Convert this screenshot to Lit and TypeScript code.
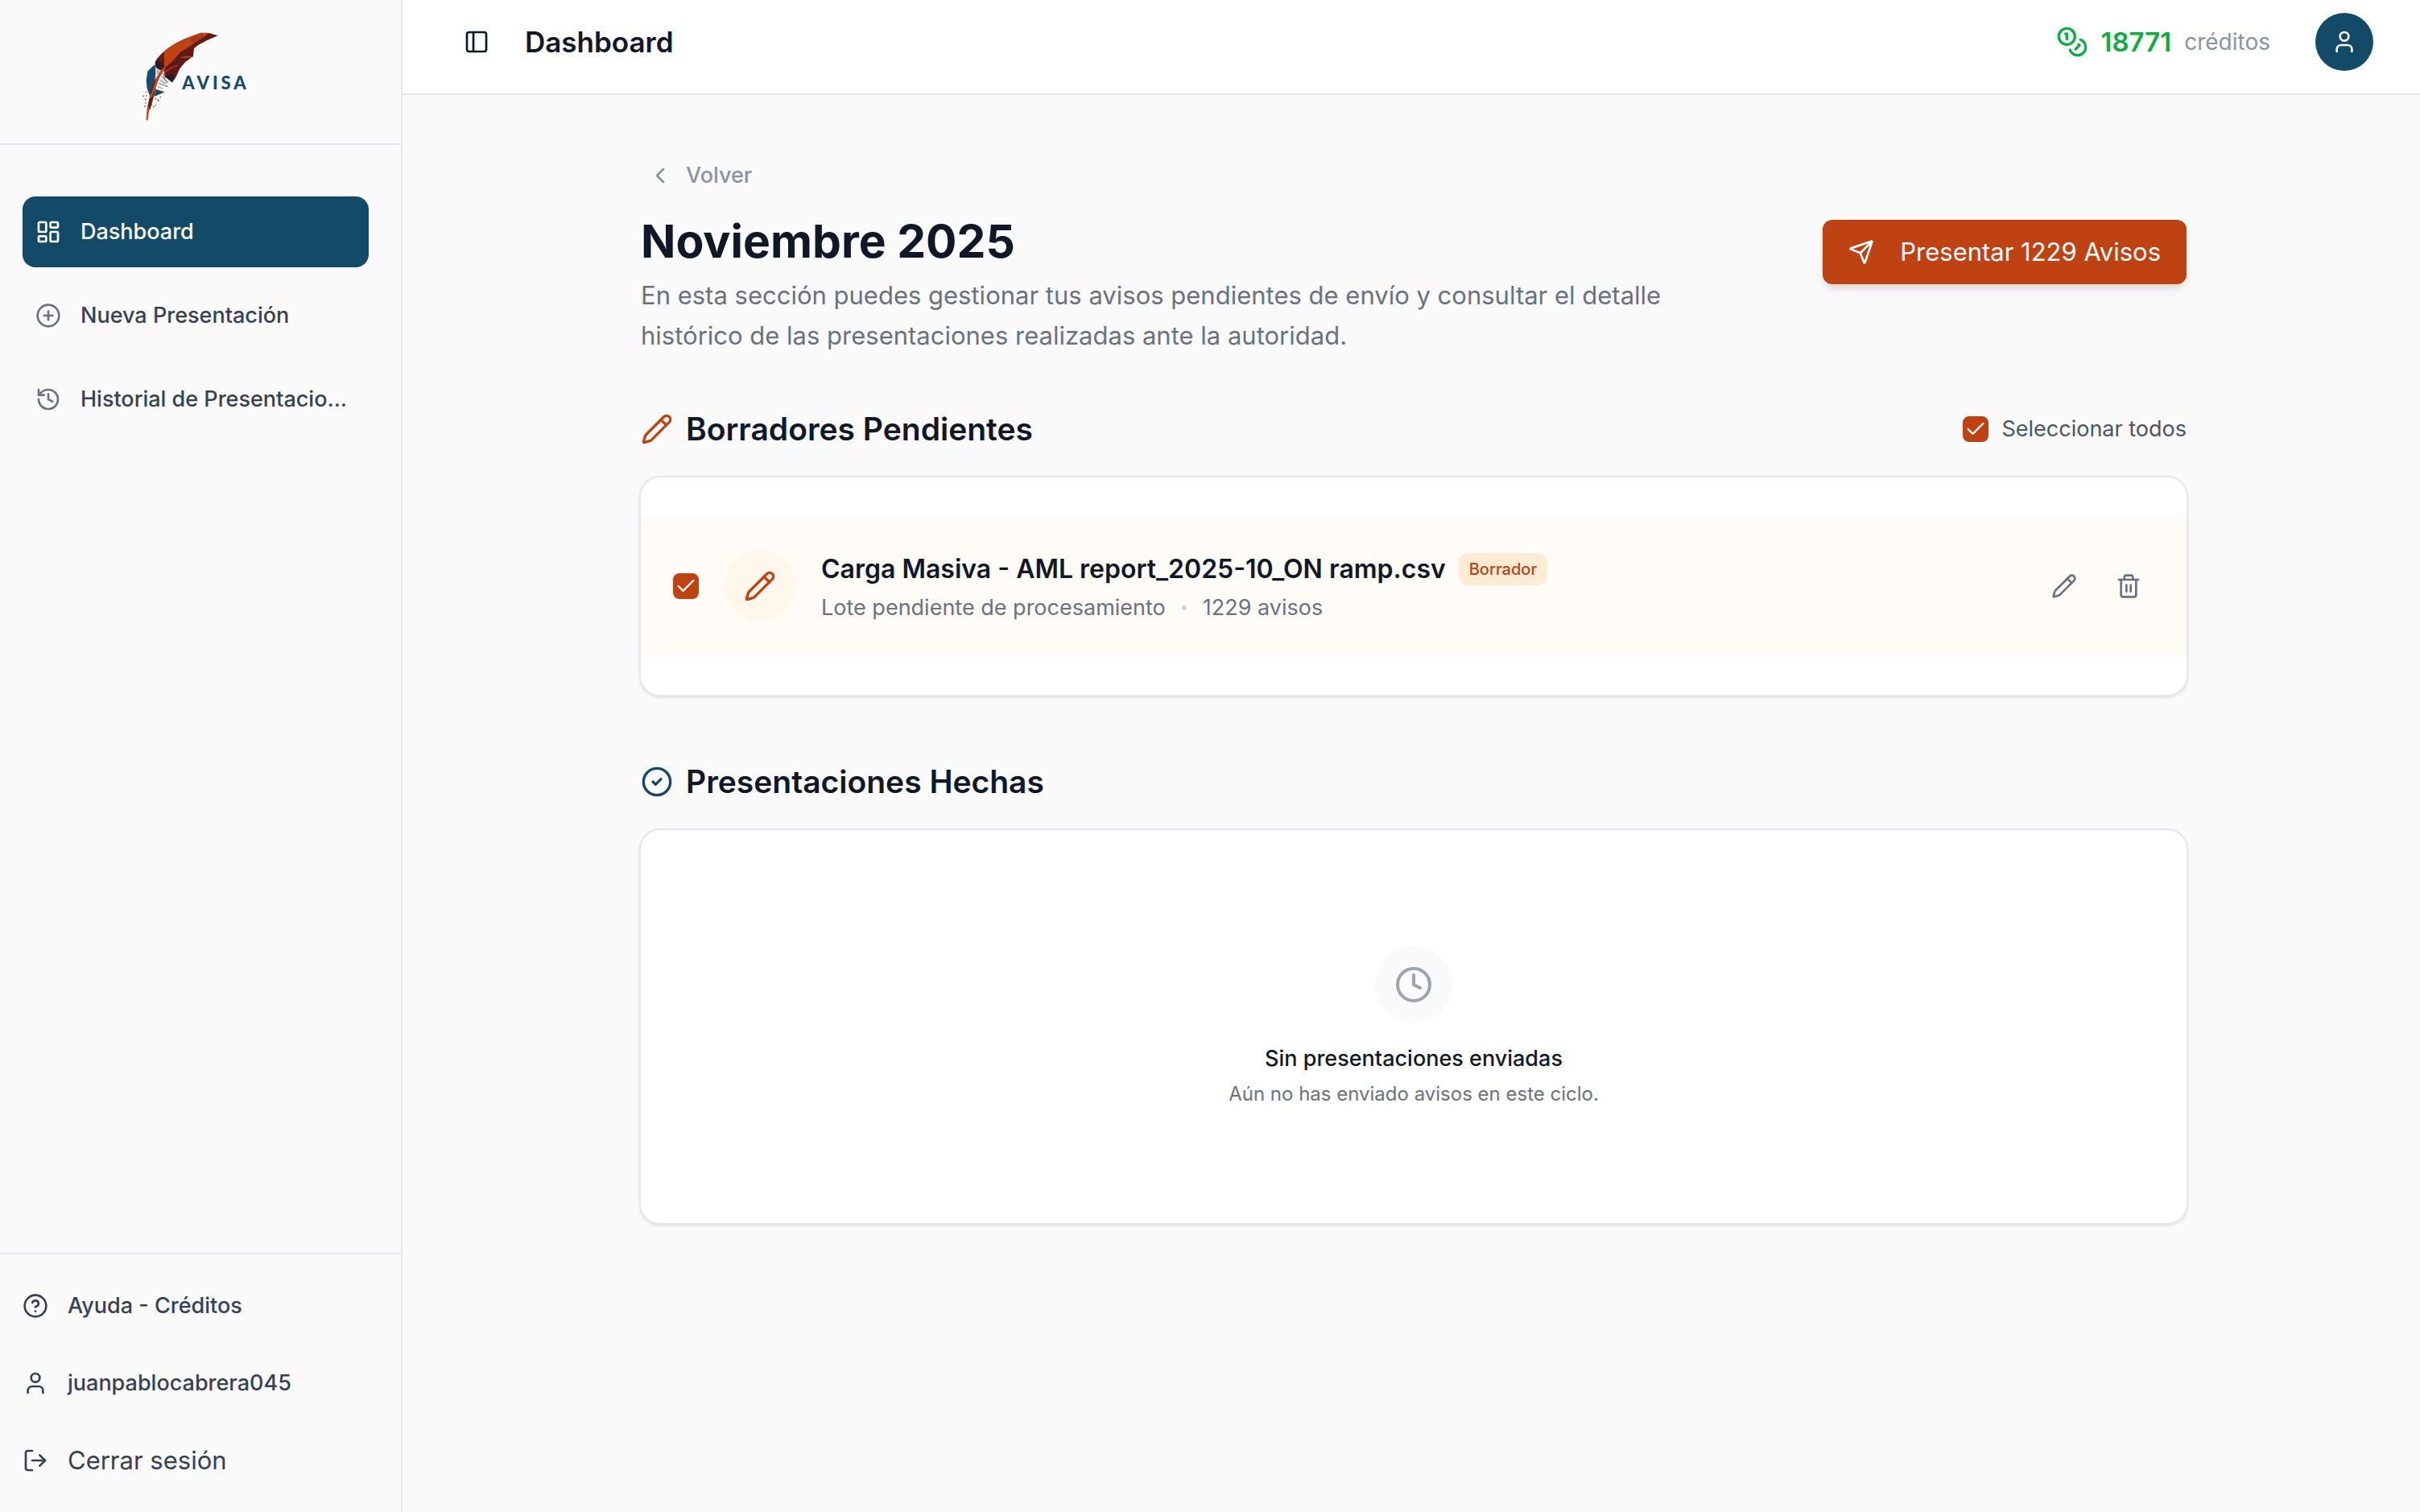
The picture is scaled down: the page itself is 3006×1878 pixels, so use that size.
import { LitElement, html, css, svg, nothing } from "lit";
import { customElement, property, state } from "lit/decorators.js";

const ICONS: Record<string, unknown> = {
  dashboard: svg`<rect x="3" y="3" width="7" height="9" rx="1"/><rect x="14" y="3" width="7" height="5" rx="1"/><rect x="14" y="12" width="7" height="9" rx="1"/><rect x="3" y="16" width="7" height="5" rx="1"/>`,
  plus: svg`<circle cx="12" cy="12" r="10"/><path d="M8 12h8M12 8v8"/>`,
  history: svg`<path d="M3 12a9 9 0 1 0 9-9 9.75 9.75 0 0 0-6.74 2.74L3 8"/><path d="M3 3v5h5"/><path d="M12 7v5l4 2"/>`,
  help: svg`<circle cx="12" cy="12" r="10"/><path d="M9.09 9a3 3 0 0 1 5.83 1c0 2-3 3-3 3"/><path d="M12 17h.01"/>`,
  user: svg`<path d="M19 21v-2a4 4 0 0 0-4-4H9a4 4 0 0 0-4 4v2"/><circle cx="12" cy="7" r="4"/>`,
  logout: svg`<path d="M9 21H5a2 2 0 0 1-2-2V5a2 2 0 0 1 2-2h4"/><path d="m16 17 5-5-5-5"/><path d="M21 12H9"/>`,
  panel: svg`<rect x="3" y="3" width="18" height="18" rx="2"/><path d="M9 3v18"/>`,
  coins: svg`<circle cx="8" cy="8" r="6"/><path d="M18.09 10.37A6 6 0 1 1 10.34 18"/><path d="M7 6h1v4"/><path d="m16.71 13.88.7.71-2.82 2.82"/>`,
  back: svg`<path d="m15 18-6-6 6-6"/>`,
  send: svg`<path d="M14.536 21.686a.5.5 0 0 0 .937-.024l6.5-19a.496.496 0 0 0-.635-.635l-19 6.5a.5.5 0 0 0-.024.937l7.93 3.18a2 2 0 0 1 1.112 1.11z"/><path d="m21.854 2.147-10.94 10.939"/>`,
  pencil: svg`<path d="M21.174 6.812a1 1 0 0 0-3.986-3.987L3.842 16.174a2 2 0 0 0-.5.83l-1.321 4.352a.5.5 0 0 0 .623.622l4.353-1.32a2 2 0 0 0 .83-.497z"/><path d="m15 5 4 4"/>`,
  trash: svg`<path d="M3 6h18"/><path d="M19 6v14a2 2 0 0 1-2 2H7a2 2 0 0 1-2-2V6"/><path d="M8 6V4a2 2 0 0 1 2-2h4a2 2 0 0 1 2 2v2"/><path d="M10 11v6M14 11v6"/>`,
  done: svg`<circle cx="12" cy="12" r="10"/><path d="m9 12 2 2 4-4"/>`,
  clock: svg`<circle cx="12" cy="12" r="10"/><path d="M12 6v6l4 2"/>`,
  check: svg`<path d="M20 6 9 17l-5-5"/>`,
};

@customElement("app-icon")
export class AppIcon extends LitElement {
  @property() name = "";

  static styles = css`
    :host { display: block; flex: none; width: 32px; height: 32px; }
    .glyph { display: block; width: 100%; height: 100%; }
  `;

  render() {
    return html`<svg class="glyph" viewBox="0 0 24 24" fill="none" stroke="currentColor"
      stroke-width="2" stroke-linecap="round" stroke-linejoin="round" aria-hidden="true">${ICONS[this.name] ?? nothing}</svg>`;
  }
}

@customElement("avisa-logo")
export class AvisaLogo extends LitElement {
  static styles = css`
    :host { display: block; width: 200px; height: 150px; }
    .mark { display: block; width: 100%; height: 100%; }
    .word { font-family: Lato, "Open Sans", sans-serif; font-weight: 900; font-size: 66px; letter-spacing: 12px; fill: #154c6b; }
  `;

  render() {
    return html`<svg class="mark" viewBox="-3 -18 600 450" role="img" aria-label="AVISA">
      <path fill="#154c6b" d="M126 180 L100 206 L95 240 L98 270 L108 296 L126 262 L131 200Z"/>
      <path fill="#154c6b" d="M124 300 L130 272 L164 283Z"/>
      <path fill="#e4e5e8" d="M130 190 L150 206 L128 258Z M160 208 L196 246 L172 250 L140 262Z"/>
      <path fill="none" stroke="#39475a" stroke-width="2" d="M122 186l8 30M130 182l12 26M134 204l8 14M158 214l8 28M152 224l22 22M146 238l22 16M140 250l36 14M138 262l18 8M118 282l18 14M104 250l18 22"/>
      <path fill="#651a1a" d="M128 176 Q132 156 161 132 Q200 98 262 76 L298 62 L330 63 L362 73 L320 91 L288 108 L273 121 L270 149 L240 172 L220 196 L208 222 L192 247 L164 226 L160 198 L148 202 L130 190Z"/>
      <path fill="#bf4213" d="M161 133 Q200 98 262 76 L298 62 L330 63 L300 84 L256 113 L222 135 L192 168 L163 195Z"/>
      <path fill="#bf4213" d="M217 155 L240 149 L270 150 L262 155Z M163 207 Q190 186 214 180 L212 185 Q184 194 163 212Z"/>
      <path fill="#301923" d="M128 172 L136 158 L162 190 L160 198 L148 202 L130 190Z M164 224 L186 216 L206 224 L192 247Z"/>
      <path fill="none" stroke="#301923" stroke-width="3" stroke-dasharray="3 4" d="M264 92l44-22M266 99l32-16M262 86l22-10M172 188l60-22M176 196l52-20M180 204l40-14M172 214l38-8M200 172l36-8"/>
      <path fill="#651a1a" d="M162 194 Q140 228 132 262 L122 304 L110 346 L104 352 L98 388 L95 386 L100 336 L110 290 L120 252 Q138 216 162 194Z"/>
      <path fill="#c8481a" d="M164 188 Q144 204 134 228 L122 264 L108 304 L114 306 L132 262 Q142 226 164 200Z M99 334 L107 338 L101 388 L95 388Z"/>
      <path fill="#2c2f45" d="M82 296h4v4h-4zM90 308h4v4h-4zM128 306h4v4h-4zM146 300h4v4h-4zM120 336h4v4h-4zM88 334h4v4h-4zM112 328h4v4h-4z"/>
      <path fill="#bf4213" d="M92 281h4v4h-4zM91 322h4v4h-4zM136 310h4v4h-4zM138 313h4v4h-4zM128 331h4v4h-4zM93 295h4v4h-4zM152 281h5v5h-5zM168 258h4v4h-4zM169 245h4v4h-4z"/>
      <text class="word" x="229" y="272">AVISA</text>
    </svg>`;
  }
}

@customElement("app-root")
export class AppRoot extends LitElement {
  @state() private selected = true;

  static styles = css`
    :host {
      --ink: #101828;
      --slate: #364153;
      --muted: #6a7282;
      --faint: #8b93a1;
      --line: #e5e7eb;
      --blue: #134a68;
      --rust: #bf4213;
      display: grid;
      grid-template-columns: 500px minmax(0, 1fr);
      min-height: 100vh;
      background: #fafafa;
      color: var(--ink);
      font-family: Inter, "Liberation Sans", sans-serif;
      font-size: 27px;
      line-height: 40px;
    }
    *, *::before, *::after { box-sizing: border-box; }
    h1, h2, h3, p, ul { margin: 0; padding: 0; }
    ul { list-style: none; }
    button { border: 0; background: none; padding: 0; margin: 0; font: inherit; color: inherit; cursor: pointer; }
    a { color: inherit; text-decoration: none; }

    .sidebar { display: flex; flex-direction: column; border-right: 2px solid var(--line); }
    .brand { display: flex; justify-content: center; padding: 14px 0; border-bottom: 2px solid var(--line); }
    .nav { flex: 1; padding: 64px 40px 64px 28px; }
    .nav-list { display: grid; grid-template-columns: minmax(0, 1fr); gap: 16px; }
    .nav-link { display: flex; align-items: center; gap: 24px; height: 88px; padding: 0 16px; border-radius: 16px; font-weight: 500; color: var(--slate); }
    .nav-link app-icon { color: var(--muted); }
    .nav-link.active, .nav-link.active app-icon { color: #fff; }
    .nav-link.active { background: var(--blue); }
    .nav-text { white-space: nowrap; }
    .foot { display: grid; gap: 16px; padding: 24px 28px; border-top: 2px solid var(--line); color: var(--slate); }
    .foot-item { display: flex; align-items: center; gap: 24px; height: 80px; font-weight: 500; text-align: left; }
    .foot-item.large { font-size: 31px; font-weight: 400; }

    .page { display: flex; flex-direction: column; min-width: 0; }
    .topbar { display: flex; align-items: center; gap: 28px; padding: 16px 58px 28px 60px; background: #fff; border-bottom: 2px solid var(--line); }
    .square { display: grid; place-items: center; width: 64px; height: 64px; }
    .crumb { flex: 1; font-size: 35px; font-weight: 600; }
    .credits { display: flex; align-items: center; gap: 16px; margin-right: 28px; color: #0fac43; }
    .icon-lg { width: 40px; height: 40px; }
    .count { font-size: 33px; font-weight: 600; }
    .unit { color: var(--faint); font-size: 28px; }
    .avatar { display: grid; place-items: center; width: 72px; height: 72px; border-radius: 50%; background: var(--blue); color: #fff; }

    .content { width: 100%; padding: 66px 32px 66px 38px; }
    .column { max-width: 1920px; margin: 0 auto; }
    .intro { display: flex; align-items: center; justify-content: space-between; gap: 32px; }
    .back { display: flex; align-items: center; gap: 16px; height: 68px; padding: 0 8px; color: var(--faint); font-weight: 500; }
    .title { margin-top: 12px; font-size: 57px; line-height: 72px; font-weight: 700; }
    .lead { max-width: 1344px; margin-top: 6px; font-size: 31px; line-height: 50px; color: var(--muted); }
    .submit { display: flex; flex: none; align-items: center; gap: 32px; height: 80px; padding: 0 32px; border-radius: 12px; background: var(--rust); color: #fff; font-size: 31px;
      box-shadow: 0 8px 12px -2px rgb(0 0 0 / 0.1), 0 4px 8px -4px rgb(0 0 0 / 0.1); }

    .section-head { display: flex; align-items: center; justify-content: space-between; margin-top: 63px; margin-bottom: 32px; }
    .section-head.next { margin-top: 80px; }
    .section-title { display: flex; align-items: center; gap: 16px; font-size: 39px; line-height: 56px; font-weight: 600; }
    .rust { color: var(--rust); }
    .blue { color: var(--blue); }
    .select-all { display: flex; align-items: center; gap: 16px; color: #4a5565; }
    .check { display: grid; place-items: center; width: 32px; height: 32px; color: #fff; }
    .check > * { grid-area: 1 / 1; }
    .check app-icon { width: 28px; height: 28px; pointer-events: none; }
    .box { appearance: none; width: 32px; height: 32px; margin: 0; border: 2px solid var(--rust); border-radius: 8px; background: #fff; }
    .box:checked { background: var(--rust); }

    .card { border-radius: 24px; background: #fff; box-shadow: 0 0 0 2px var(--line), 0 2px 6px rgb(0 0 0 / 0.1), 0 2px 4px rgb(0 0 0 / 0.1); }
    .drafts { padding: 48px 0; }
    .draft { display: flex; align-items: center; gap: 32px; padding: 40px; background: #fffcf7; }
    .disc { display: grid; place-items: center; width: 88px; height: 88px; border-radius: 50%; background: #fff6ec; color: var(--rust); }
    .draft-body { flex: 1; min-width: 0; display: grid; gap: 4px; padding-top: 2px; }
    .draft-top { display: flex; align-items: center; gap: 16px; }
    .draft-name { font-size: 32px; line-height: 48px; font-weight: 600; }
    .badge { height: 40px; padding: 0 13px; border-radius: 12px; background: #fdebd3; color: var(--rust); font-size: 20px; font-weight: 500; }
    .draft-meta { display: flex; align-items: center; gap: 20px; color: var(--muted); }
    .dot { width: 6px; height: 6px; border-radius: 50%; background: #d1d5dc; }
    .actions { display: flex; gap: 16px; color: var(--muted); }

    .empty { display: flex; flex-direction: column; align-items: center; padding: 144px 32px; text-align: center; }
    .empty-disc { display: grid; place-items: center; width: 96px; height: 96px; border-radius: 50%; background: #fafafa; color: #9da4ae; }
    .empty-disc app-icon { width: 48px; height: 48px; }
    .empty-title { margin-top: 24px; font-size: 27px; font-weight: 500; }
    .empty-text { margin-top: 8px; font-size: 24px; line-height: 32px; color: var(--muted); }
  `;

  private toggle = (e: Event) => {
    this.selected = (e.target as HTMLInputElement).checked;
  };

  private checkbox(id: string, label?: string) {
    return html`<span class="check">
      <input class="box" type="checkbox" id=${id} aria-label=${label ?? nothing} .checked=${this.selected} @change=${this.toggle}>
      ${this.selected ? html`<app-icon name="check"></app-icon>` : nothing}
    </span>`;
  }

  private navLink(icon: string, text: string, active = false) {
    return html`<li><a class="nav-link ${active ? "active" : ""}" href="#" aria-current=${active ? "page" : nothing}>
      <app-icon name=${icon}></app-icon><span class="nav-text">${text}</span></a></li>`;
  }

  render() {
    return html`
      <aside class="sidebar">
        <div class="brand"><avisa-logo></avisa-logo></div>
        <nav class="nav">
          <ul class="nav-list">
            ${this.navLink("dashboard", "Dashboard", true)}
            ${this.navLink("plus", "Nueva Presentación")}
            ${this.navLink("history", "Historial de Presentacio...")}
          </ul>
        </nav>
        <div class="foot">
          <a class="foot-item" href="#"><app-icon name="help"></app-icon>Ayuda - Créditos</a>
          <a class="foot-item" href="#"><app-icon name="user"></app-icon>juanpablocabrera045</a>
          <button class="foot-item large" type="button"><app-icon name="logout"></app-icon>Cerrar sesión</button>
        </div>
      </aside>
      <div class="page">
        <header class="topbar">
          <button class="square" type="button" aria-label="Panel lateral"><app-icon name="panel"></app-icon></button>
          <div class="crumb">Dashboard</div>
          <div class="credits">
            <app-icon class="icon-lg" name="coins"></app-icon>
            <span class="count">18771</span>
            <span class="unit">créditos</span>
          </div>
          <button class="avatar" type="button" aria-label="Cuenta"><app-icon name="user"></app-icon></button>
        </header>
        <main class="content">
          <div class="column">
            <div class="intro">
              <div>
                <button class="back" type="button"><app-icon name="back"></app-icon>Volver</button>
                <h1 class="title">Noviembre 2025</h1>
                <p class="lead">En esta sección puedes gestionar tus avisos pendientes de envío y consultar el detalle histórico de las presentaciones realizadas ante la autoridad.</p>
              </div>
              <button class="submit" type="button"><app-icon name="send"></app-icon>Presentar 1229 Avisos</button>
            </div>

            <div class="section-head">
              <h2 class="section-title"><app-icon class="icon-lg rust" name="pencil"></app-icon>Borradores Pendientes</h2>
              <label class="select-all" for="all">${this.checkbox("all")}Seleccionar todos</label>
            </div>
            <ul class="card drafts">
              <li class="draft">
                ${this.checkbox("draft-1", "Seleccionar borrador")}
                <span class="disc"><app-icon class="icon-lg" name="pencil"></app-icon></span>
                <div class="draft-body">
                  <div class="draft-top">
                    <h3 class="draft-name">Carga Masiva - AML report_2025-10_ON ramp.csv</h3>
                    <span class="badge">Borrador</span>
                  </div>
                  <div class="draft-meta">
                    <span>Lote pendiente de procesamiento</span><span class="dot"></span><span>1229 avisos</span>
                  </div>
                </div>
                <div class="actions">
                  <button class="square" type="button" aria-label="Editar"><app-icon name="pencil"></app-icon></button>
                  <button class="square" type="button" aria-label="Eliminar"><app-icon name="trash"></app-icon></button>
                </div>
              </li>
            </ul>

            <div class="section-head next">
              <h2 class="section-title"><app-icon class="icon-lg blue" name="done"></app-icon>Presentaciones Hechas</h2>
            </div>
            <section class="card empty">
              <span class="empty-disc"><app-icon name="clock"></app-icon></span>
              <h3 class="empty-title">Sin presentaciones enviadas</h3>
              <p class="empty-text">Aún no has enviado avisos en este ciclo.</p>
            </section>
          </div>
        </main>
      </div>
    `;
  }
}
